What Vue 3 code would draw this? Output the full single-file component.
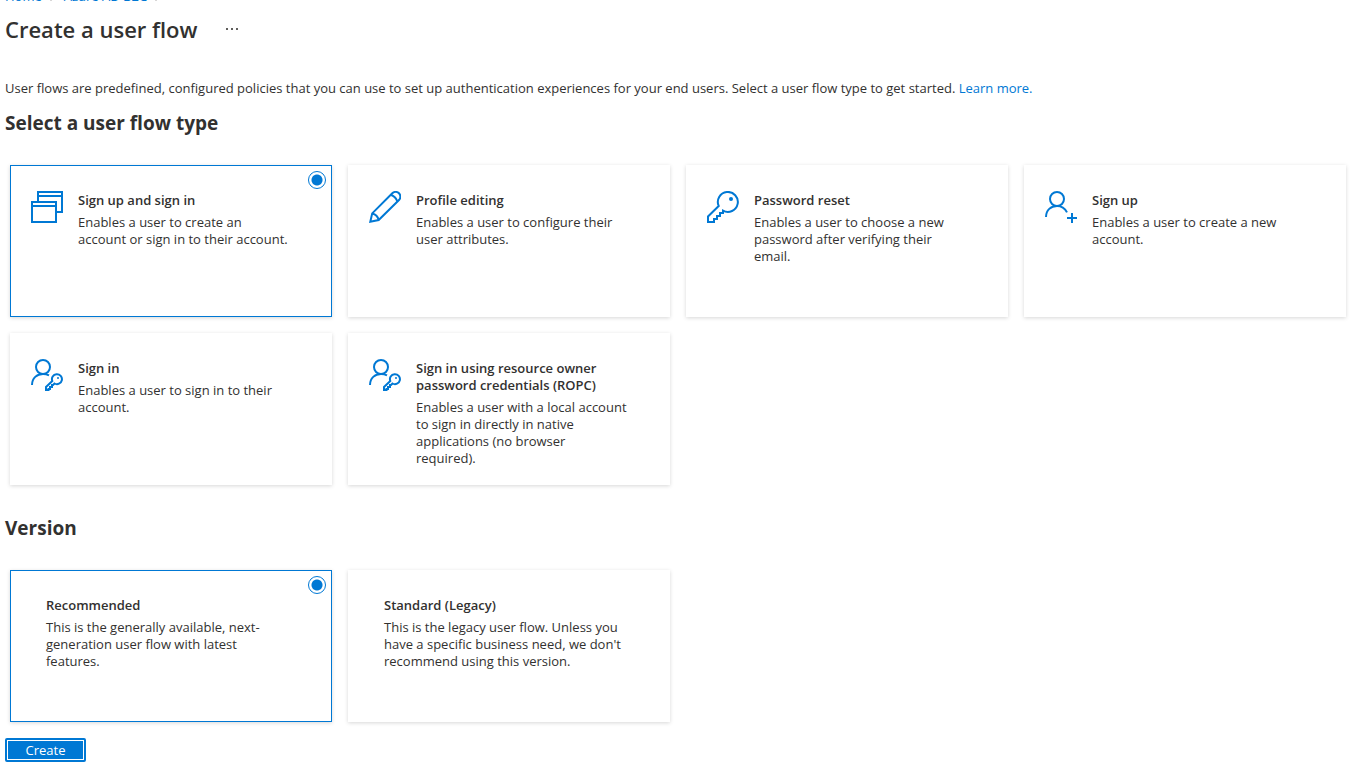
<script setup>
import { ref } from 'vue'

const flowTypes = [
  { id: 'signup-signin', icon: 'windows', title: 'Sign up and sign in', text: 'Enables a user to create an account or sign in to their account.' },
  { id: 'profile', icon: 'pencil', title: 'Profile editing', text: 'Enables a user to configure their user attributes.' },
  { id: 'reset', icon: 'key', title: 'Password reset', text: 'Enables a user to choose a new password after verifying their email.' },
  { id: 'signup', icon: 'user-add', title: 'Sign up', text: 'Enables a user to create a new account.' },
  { id: 'signin', icon: 'user-key', title: 'Sign in', text: 'Enables a user to sign in to their account.' },
  { id: 'ropc', icon: 'user-key', title: 'Sign in using resource owner password credentials (ROPC)', text: 'Enables a user with a local account to sign in directly in native applications (no browser required).' },
]
const versions = [
  { id: 'recommended', title: 'Recommended', text: 'This is the generally available, next-generation user flow with latest features.' },
  { id: 'standard', title: 'Standard (Legacy)', text: "This is the legacy user flow. Unless you have a specific business need, we don't recommend using this version." },
]
const crumbs = ['Home', 'Azure AD B2C']
const icons = {
  windows: ['M7 10V1H31V21H26', 'M7 5H31', 'M1 11H25V31H1Z', 'M1 15H25'],
  pencil: ['M1.3 30.7L3.2 22.4L23.3 2.3A4.7 4.7 0 0 1 30 9L9.7 29Z', 'M21.8 3.8Q26.5 5.5 28.4 10.4', 'M3.2 22.4Q8.5 23.5 9.7 29'],
  key: ['M11.7 15A10 10 0 1 1 16 19.7V22H13V25H10V28H7V31H1V25.5Z'],
  'user-add': ['M12 1A7 7 0 1 1 12 15A7 7 0 1 1 12 1Z', 'M1 26C1 19 6 15 12 15C16.5 15 20 17.5 22 21.4', 'M27 22V32', 'M22 27H32'],
  'user-key': ['M12 1A7 7 0 1 1 12 15A7 7 0 1 1 12 1Z', 'M1 26C1 19 6 15 12 15Q15.5 15 18 16.4', 'M21.3 22A5 5 0 1 1 23.5 24.5L22 26H21V28H19V30H17.5V31H15V28Z'],
}
const dots = { key: [24, 8, 2], 'user-key': [27, 19, 1] }

const flow = ref('signup-signin')
const version = ref('recommended')
</script>

<template>
  <div class="page">
    <nav class="crumbs" aria-label="Breadcrumb">
      <template v-for="c in crumbs" :key="c">
        <a href="#">{{ c }}</a>
        <svg width="6" height="9" viewBox="0 0 6 9" aria-hidden="true"><path d="M1 0.5L5 4.5L1 8.5" /></svg>
      </template>
    </nav>
    <header class="title-row">
      <h1>Create a user flow</h1>
      <button class="more" type="button" aria-label="More options">
        <svg width="12" height="2" viewBox="0 0 12 2" aria-hidden="true"><path d="M0 0h2v2H0zM5 0h2v2H5zM10 0h2v2h-2z" /></svg>
      </button>
    </header>

    <main>
      <p class="intro">
        User flows are predefined, configured policies that you can use to set up authentication experiences for your end users. Select a user flow type to get started. <a href="#">Learn more.</a>
      </p>

      <h2 id="type-heading">Select a user flow type</h2>
      <div class="cards" role="radiogroup" aria-labelledby="type-heading">
        <label v-for="f in flowTypes" :key="f.id" class="card" :class="{ selected: flow === f.id }">
          <input v-model="flow" type="radio" name="flow" :value="f.id" />
          <svg class="icon" width="32" height="32" viewBox="0 0 32 32" aria-hidden="true">
            <path v-for="d in icons[f.icon]" :key="d" :d="d" />
            <circle v-if="dots[f.icon]" :cx="dots[f.icon][0]" :cy="dots[f.icon][1]" :r="dots[f.icon][2]" />
          </svg>
          <span class="body"><strong>{{ f.title }}</strong><span>{{ f.text }}</span></span>
        </label>
      </div>

      <h2 id="version-heading">Version</h2>
      <div class="cards" role="radiogroup" aria-labelledby="version-heading">
        <label v-for="v in versions" :key="v.id" class="card plain" :class="{ selected: version === v.id }">
          <input v-model="version" type="radio" name="version" :value="v.id" />
          <span class="body"><strong>{{ v.title }}</strong><span>{{ v.text }}</span></span>
        </label>
      </div>

      <button class="create" type="button">Create</button>
    </main>
  </div>
</template>

<style>
body {
  background: #fff;
}
</style>

<style scoped>
.page {
  padding: 0 5px;
  color: #323130;
  font-family: "Open Sans", "Noto Sans", sans-serif;
  font-size: 13px;
  line-height: 17px;
}
a {
  color: #0078d4;
  text-decoration: none;
}
.crumbs {
  display: flex;
  align-items: flex-end;
  gap: 8px;
  height: 5px;
  overflow: hidden;
}
.crumbs svg {
  flex: none;
  margin-bottom: 4px;
  fill: none;
  stroke: #605e5c;
}
.title-row {
  display: flex;
  align-items: center;
  gap: 29px;
  height: 47px;
}
h1 {
  margin: 0;
  font-size: 22px;
  line-height: 32px;
  font-weight: 600;
}
.more {
  display: flex;
  align-items: center;
  padding: 0;
  height: 24px;
  border: 0;
  background: none;
}
.more path {
  fill: #605e5c;
}
.intro {
  margin: 28px 0 0;
}
h2 {
  margin: 12px 0 28px;
  font-size: 19px;
  line-height: 28px;
  font-weight: 700;
}
.cards {
  display: grid;
  grid-template-columns: repeat(4, 1fr);
  gap: 16px;
  margin: 0 20px 29px 5px;
}
.card {
  position: relative;
  box-sizing: border-box;
  display: flex;
  gap: 15px;
  min-height: 152px;
  padding: 25px 41px 16px 20px;
  border: 1px solid transparent;
  background: #fff;
  box-shadow: 0 1px 4px rgba(0, 0, 0, 0.16);
}
.card.plain {
  padding-right: 45px;
  padding-left: 35px;
}
.card.selected {
  border-color: #0078d4;
}
.card input {
  appearance: none;
  position: absolute;
  top: 5px;
  right: 5px;
  box-sizing: border-box;
  width: 18px;
  height: 18px;
  margin: 0;
  border: 1px solid #0078d4;
  border-radius: 50%;
  background: radial-gradient(circle, #0078d4 5px, #fff 6px);
  opacity: 0;
}
.card input:checked {
  opacity: 1;
}
.icon {
  flex: none;
  fill: none;
  stroke: #0078d4;
  stroke-width: 2;
}
.icon circle {
  fill: #0078d4;
  stroke: none;
}
.body {
  display: flex;
  flex-direction: column;
  gap: 5px;
  padding-top: 1px;
}
.body strong {
  font-weight: 600;
}
.create {
  display: block;
  width: 81px;
  height: 24px;
  margin-top: -13px;
  padding: 0;
  border: 2px solid #0078d4;
  border-radius: 2px;
  background: #0078d4;
  box-shadow: inset 0 0 0 1px #fff;
  color: #fff;
  font: inherit;
}
</style>
